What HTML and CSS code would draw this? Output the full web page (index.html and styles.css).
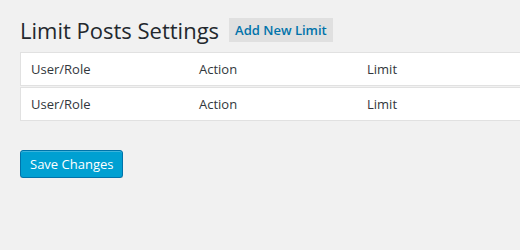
FILE: index.html
```html
<!DOCTYPE html>
<html lang="en">
<head>
    <meta charset="UTF-8">
    <title>Limit Posts Settings</title>
    <link rel="stylesheet" href="styles.css">
</head>
<body>
    <div class="wrap">
        <div class="page-head">
            <h1>Limit Posts Settings</h1>
            <a class="title-action" href="#">Add New Limit</a>
        </div>

        <table class="limits">
            <tr>
                <td>User/Role</td>
                <td>Action</td>
                <td>Limit</td>
            </tr>
            <tr>
                <td>User/Role</td>
                <td>Action</td>
                <td>Limit</td>
            </tr>
        </table>

        <button class="button-primary">Save Changes</button>
    </div>
</body>
</html>
```

FILE: styles.css
```css
body {
    margin: 0;
    background: #f1f1f1;
    font-family: "Open Sans", sans-serif;
    color: #32373c;
    overflow: hidden;
}
.wrap {
    padding: 18px 0 0 20px;
    width: 520px;
}
.page-head {
    display: flex;
    align-items: center;
    gap: 10px;
    height: 24px;
}
h1 {
    margin: 0;
    font-size: 22px;
    font-weight: 400;
    color: #23282d;
    line-height: 24px;
}
.title-action {
    background: #e0e0e0;
    color: #0073aa;
    font-size: 13px;
    font-weight: 600;
    text-decoration: none;
    padding: 4px 6px;
    line-height: 16px;
}
.limits {
    margin-top: 9px;
    width: 505px;
    border-collapse: separate;
    border-spacing: 0 1px;
}
.limits td {
    background: #fff;
    border-top: 1px solid #e1e1e1;
    border-bottom: 1px solid #e1e1e1;
    height: 32px;
    padding: 0 10px;
    width: 148px;
    font-size: 13px;
}
.limits td:first-child {
    border-left: 1px solid #e1e1e1;
}
.button-primary {
    margin-top: 28px;
    background: #00a0d2;
    border: 1px solid #0073aa;
    border-radius: 3px;
    box-shadow: inset 0 1px 0 rgba(120, 200, 230, 0.5), 0 1px 0 rgba(0, 0, 0, 0.15);
    color: #fff;
    font-family: "Open Sans", sans-serif;
    font-size: 13px;
    height: 28px;
    padding: 0 9px;
    cursor: pointer;
}
```
